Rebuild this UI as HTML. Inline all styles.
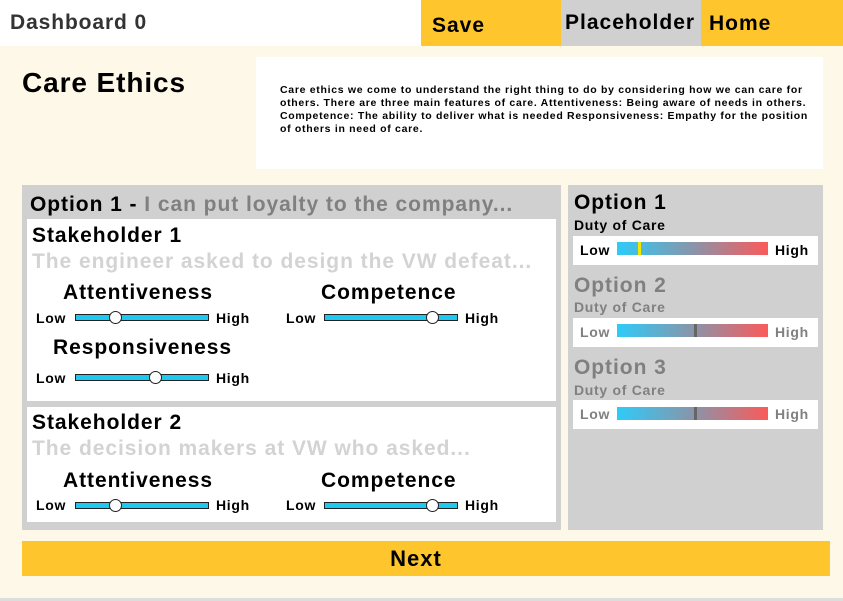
<!DOCTYPE html>
<html><head><style>
*{margin:0;padding:0;box-sizing:border-box}
body{width:843px;height:601px;background:#fef8e8;font-family:"Liberation Sans",sans-serif;font-weight:bold;position:relative;overflow:hidden}
.a{position:absolute;white-space:nowrap}
.h{font-size:21px;letter-spacing:0.95px}
.tr{position:absolute;height:7px;background:#1ec8f0;border:1.5px solid #222}
.th{position:absolute;width:13px;height:13px;border-radius:50%;background:#fff;border:1.5px solid #222}
.sm{font-size:14px;letter-spacing:0.7px}
.bar{position:absolute;height:13px;background:linear-gradient(90deg,#2ecbf8,#8895aa 50%,#fb5a5a)}
</style></head><body>
<div class="a" style="left:0;top:0;width:421px;height:46px;background:#fff"></div>
<div class="a" style="left:10px;top:11px;font-size:21px;letter-spacing:0.9px;color:#333">Dashboard 0</div>
<div class="a" style="left:421px;top:0;width:140px;height:46px;background:#fec62c"></div>
<div class="a" style="left:432px;top:14px;font-size:21px;letter-spacing:1px">Save</div>
<div class="a" style="left:561px;top:0;width:140px;height:46px;background:#d0d0d0"></div>
<div class="a" style="left:565px;top:11px;font-size:21px;letter-spacing:1px">Placeholder</div>
<div class="a" style="left:701px;top:0;width:142px;height:46px;background:#fec62c"></div>
<div class="a" style="left:709px;top:12px;font-size:21px;letter-spacing:1px">Home</div>
<div class="a" style="left:0;top:598px;width:843px;height:3px;background:#ddd"></div>

<div class="a" style="left:22px;top:67px;font-size:28px;letter-spacing:0.9px">Care Ethics</div>
<div class="a" style="left:256px;top:57px;width:567px;height:112px;background:#fff"></div>
<div class="a" style="left:280px;top:84px;font-size:10.5px;line-height:13px;white-space:normal;width:532px;letter-spacing:0.7px">Care ethics we come to understand the right thing to do by considering how we can care for others. There are three main features of care. Attentiveness: Being aware of needs in others. Competence: The ability to deliver what is needed Responsiveness: Empathy for the position of others in need of care.</div>

<div class="a" style="left:22px;top:185px;width:539px;height:345px;background:#d0d0d0"></div>
<div class="a h" style="left:30px;top:193px">Option 1 - <span style="color:#808080">I can put loyalty to the company...</span></div>
<div class="a" style="left:27px;top:219px;width:529px;height:182px;background:#fff"></div>
<div class="a h" style="left:32px;top:224px">Stakeholder 1</div>
<div class="a h" style="left:32px;top:250px;color:#d3d3d3">The engineer asked to design the VW defeat...</div>
<div class="a h" style="left:63px;top:281px">Attentiveness</div>
<div class="a h" style="left:321px;top:281px">Competence</div>
<div class="a sm" style="left:36px;top:310px">Low</div><div class="tr" style="left:75px;top:314px;width:134px"></div><div class="th" style="left:109px;top:311px"></div><div class="a sm" style="left:216px;top:310px">High</div>
<div class="a sm" style="left:286px;top:310px">Low</div><div class="tr" style="left:324px;top:314px;width:134px"></div><div class="th" style="left:426px;top:311px"></div><div class="a sm" style="left:465px;top:310px">High</div>
<div class="a h" style="left:53px;top:336px">Responsiveness</div>
<div class="a sm" style="left:36px;top:370px">Low</div><div class="tr" style="left:75px;top:374px;width:134px"></div><div class="th" style="left:149px;top:371px"></div><div class="a sm" style="left:216px;top:370px">High</div>

<div class="a" style="left:27px;top:407px;width:529px;height:115px;background:#fff"></div>
<div class="a h" style="left:32px;top:411px">Stakeholder 2</div>
<div class="a h" style="left:32px;top:437px;color:#d3d3d3">The decision makers at VW who asked...</div>
<div class="a h" style="left:63px;top:469px">Attentiveness</div>
<div class="a h" style="left:321px;top:469px">Competence</div>
<div class="a sm" style="left:36px;top:497px">Low</div><div class="tr" style="left:75px;top:502px;width:134px"></div><div class="th" style="left:109px;top:499px"></div><div class="a sm" style="left:216px;top:497px">High</div>
<div class="a sm" style="left:286px;top:497px">Low</div><div class="tr" style="left:324px;top:502px;width:134px"></div><div class="th" style="left:426px;top:499px"></div><div class="a sm" style="left:465px;top:497px">High</div>

<div class="a" style="left:568px;top:185px;width:255px;height:345px;background:#d0d0d0"></div>
<div class="a h" style="left:574px;top:191px">Option 1</div>
<div class="a sm" style="left:574px;top:217px">Duty of Care</div>
<div class="a" style="left:573px;top:236px;width:245px;height:29px;background:#fff"></div>
<div class="a sm" style="left:580px;top:242px">Low</div><div class="bar" style="left:617px;top:242px;width:151px"></div><div class="a" style="left:638px;top:242px;width:3px;height:13px;background:#f5e600"></div><div class="a sm" style="left:775px;top:242px">High</div>

<div class="a h" style="left:574px;top:274px;color:#808080">Option 2</div>
<div class="a sm" style="left:574px;top:299px;color:#808080">Duty of Care</div>
<div class="a" style="left:573px;top:318px;width:245px;height:29px;background:#fff"></div>
<div class="a sm" style="left:580px;top:324px;color:#808080">Low</div><div class="bar" style="left:617px;top:324px;width:151px"></div><div class="a" style="left:694px;top:324px;width:3px;height:13px;background:#666"></div><div class="a sm" style="left:775px;top:324px;color:#808080">High</div>

<div class="a h" style="left:574px;top:356px;color:#808080">Option 3</div>
<div class="a sm" style="left:574px;top:382px;color:#808080">Duty of Care</div>
<div class="a" style="left:573px;top:400px;width:245px;height:29px;background:#fff"></div>
<div class="a sm" style="left:580px;top:406px;color:#808080">Low</div><div class="bar" style="left:617px;top:407px;width:151px"></div><div class="a" style="left:694px;top:407px;width:3px;height:13px;background:#666"></div><div class="a sm" style="left:775px;top:406px;color:#808080">High</div>

<div class="a" style="left:22px;top:541px;width:808px;height:35px;background:#fec62c"></div>
<div class="a" style="left:12px;top:546px;width:808px;text-align:center;font-size:22px;letter-spacing:1px">Next</div>
</body></html>
